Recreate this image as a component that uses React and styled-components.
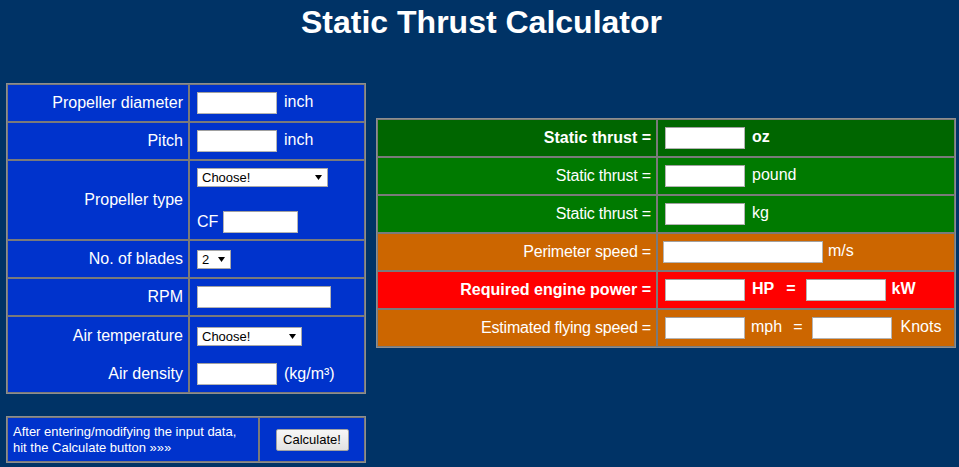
import React from 'react';
import styled, { createGlobalStyle } from 'styled-components';

const Global = createGlobalStyle`
  html, body { margin: 0; padding: 0; background: #003366; }
  body { font-family: "Liberation Sans", Arial, sans-serif; color: #fff; }
  * { box-sizing: border-box; }
`;

const Page = styled.div`
  width: 959px;
  min-height: 467px;
  background: #003366;
`;

const Title = styled.h1`
  margin: 0;
  padding: 4px 0 0 4px;
  font-size: 32px;
  line-height: 37px;
  font-weight: bold;
  text-align: center;
  color: #fff;
`;

const Main = styled.div`
  display: flex;
  align-items: flex-start;
  gap: 10px;
  padding-left: 6px;
`;

const LeftCol = styled.div`
  margin-top: 42px;
  width: 360px;
  display: flex;
  flex-direction: column;
  gap: 22px;
`;

const RightCol = styled.div`
  margin-top: 77px;
  width: 580px;
`;

const Grid = styled.table`
  width: ${(p) => p.$w}px;
  border-collapse: separate;
  border-spacing: 0;
  table-layout: fixed;
  border: 1px solid #8e8e8e;
  background: ${(p) => p.$bg || '#0033cc'};
`;

const Label = styled.td`
  width: ${(p) => p.$w}px;
  height: ${(p) => (p.$h || 36) + 2}px;
  border: 1px solid #7a7a7a;
  padding: 0 5px 0 0;
  text-align: right;
  vertical-align: middle;
  font-size: 16px;
  font-weight: ${(p) => (p.$bold ? 'bold' : 'normal')};
  letter-spacing: ${(p) => (p.$tight ? '-0.2px' : 'normal')};
  color: #fff;
  background: ${(p) => p.$bg || 'transparent'};
  white-space: nowrap;
`;

const Value = styled.td`
  height: ${(p) => (p.$h || 36) + 2}px;
  border: 1px solid #7a7a7a;
  padding: 0 0 0 7px;
  vertical-align: middle;
  font-size: 16px;
  font-weight: ${(p) => (p.$bold ? 'bold' : 'normal')};
  color: #fff;
  background: ${(p) => p.$bg || 'transparent'};
  white-space: nowrap;
`;

const Line = styled.div`
  height: ${(p) => p.$h || 38}px;
  display: flex;
  align-items: center;
  justify-content: ${(p) => (p.$right ? 'flex-end' : 'flex-start')};
`;

const Stack = styled.div`
  display: flex;
  flex-direction: column;
  gap: 24px;
`;

const Field = styled.input`
  width: ${(p) => p.$w || 80}px;
  height: 22px;
  margin: 0 0 0 ${(p) => p.$ml || 0}px;
  padding: 1px 3px;
  border: 1px solid #b4b4b4;
  border-top-color: #a0a0a0;
  background: #fff;
  font: 13px "Liberation Sans", Arial, sans-serif;
  vertical-align: middle;
  outline: none;
`;

const Unit = styled.span`
  margin: 0 ${(p) => p.$mr || 0}px 0 ${(p) => (p.$ml === undefined ? 7 : p.$ml)}px;
  font-weight: inherit;
`;

const SelectWrap = styled.span`
  position: relative;
  display: inline-block;
  width: ${(p) => p.$w}px;
  height: 19px;
  vertical-align: middle;
`;

const Select = styled.select`
  appearance: none;
  -webkit-appearance: none;
  width: 100%;
  height: 100%;
  margin: 0;
  padding: 0 0 0 4px;
  border: 1px solid #a9a9a9;
  border-radius: 0;
  background: #fff;
  color: #000;
  font: 13px "Liberation Sans", Arial, sans-serif;
  outline: none;
`;

const Arrow = styled.svg`
  position: absolute;
  right: 6px;
  top: 7px;
  pointer-events: none;
`;

const CfLabel = styled.span`
  margin-right: 5px;
  font-size: 16px;
`;

const Note = styled.td`
  width: 252px;
  height: 45px;
  border: 1px solid #7a7a7a;
  padding: 0 0 0 5px;
  font-size: 13px;
  line-height: 16px;
  color: #fff;
  vertical-align: middle;
`;

const ButtonCell = styled.td`
  border: 1px solid #7a7a7a;
  text-align: center;
  vertical-align: middle;
`;

const Button = styled.button`
  width: 73px;
  height: 22px;
  padding: 0;
  border: 1px solid #a2a2a2;
  border-radius: 2px;
  background: linear-gradient(#f7f7f7, #e2e2e2);
  color: #000;
  font: 13px "Liberation Sans", Arial, sans-serif;
`;

function Dropdown({ w, value, options }) {
  return (
    <SelectWrap $w={w}>
      <Select defaultValue={value}>
        {options.map((o) => (
          <option key={o}>{o}</option>
        ))}
      </Select>
      <Arrow width="7" height="5" viewBox="0 0 7 5">
        <polygon points="0,0 7,0 3.5,5" fill="#000" />
      </Arrow>
    </SelectWrap>
  );
}

const DG = '#006600';
const GR = '#007a00';
const OR = '#cc6600';
const RD = '#ff0000';

export default function App() {
  return (
    <Page>
      <Global />
      <Title>Static Thrust Calculator</Title>
      <Main>
        <LeftCol>
          <Grid $w={360}>
            <tbody>
              <tr>
                <Label $w={182}>Propeller diameter</Label>
                <Value>
                  <Field />
                  <Unit>inch</Unit>
                </Value>
              </tr>
              <tr>
                <Label>Pitch</Label>
                <Value>
                  <Field />
                  <Unit>inch</Unit>
                </Value>
              </tr>
              <tr>
                <Label $h={78}>Propeller type</Label>
                <Value $h={78}>
                  <Stack>
                    <Line $h={19}>
                      <Dropdown w={131} value="Choose!" options={['Choose!']} />
                    </Line>
                    <Line $h={21}>
                      <CfLabel>CF</CfLabel>
                      <Field $w={75} />
                    </Line>
                  </Stack>
                </Value>
              </tr>
              <tr>
                <Label>No. of blades</Label>
                <Value>
                  <Dropdown w={34} value="2" options={['2', '3', '4']} />
                </Value>
              </tr>
              <tr>
                <Label>RPM</Label>
                <Value>
                  <Field $w={134} />
                </Value>
              </tr>
              <tr>
                <Label $h={75}>
                  <Line $right>Air temperature</Line>
                  <Line $right $h={37}>Air density</Line>
                </Label>
                <Value $h={75}>
                  <Line>
                    <Dropdown w={105} value="Choose!" options={['Choose!']} />
                  </Line>
                  <Line $h={37}>
                    <Field />
                    <Unit>(kg/m³)</Unit>
                  </Line>
                </Value>
              </tr>
            </tbody>
          </Grid>
          <Grid $w={360}>
            <tbody>
              <tr>
                <Note>
                  After entering/modifying the input data,
                  <br />
                  hit the Calculate button »»»
                </Note>
                <ButtonCell>
                  <Button type="button">Calculate!</Button>
                </ButtonCell>
              </tr>
            </tbody>
          </Grid>
        </LeftCol>
        <RightCol>
          <Grid $w={580} $bg={GR}>
            <tbody>
              <tr>
                <Label $w={280} $bg={DG} $bold>Static thrust =</Label>
                <Value $bg={DG} $bold>
                  <Field />
                  <Unit>oz</Unit>
                </Value>
              </tr>
              <tr>
                <Label $bg={GR} $tight>Static thrust =</Label>
                <Value $bg={GR}>
                  <Field />
                  <Unit>pound</Unit>
                </Value>
              </tr>
              <tr>
                <Label $bg={GR} $tight>Static thrust =</Label>
                <Value $bg={GR}>
                  <Field />
                  <Unit>kg</Unit>
                </Value>
              </tr>
              <tr>
                <Label $bg={OR} $tight>Perimeter speed =</Label>
                <Value $bg={OR}>
                  <Field $w={160} $ml={-2} />
                  <Unit $ml={5}>m/s</Unit>
                </Value>
              </tr>
              <tr>
                <Label $bg={RD} $bold>Required engine power =</Label>
                <Value $bg={RD} $bold>
                  <Field />
                  <Unit>HP</Unit>
                  <Unit $ml={12} $mr={10}>=</Unit>
                  <Field />
                  <Unit $ml={6}>kW</Unit>
                </Value>
              </tr>
              <tr>
                <Label $bg={OR} $tight>Estimated flying speed =</Label>
                <Value $bg={OR}>
                  <Field />
                  <Unit $ml={6}>mph</Unit>
                  <Unit $ml={11} $mr={10}>=</Unit>
                  <Field />
                  <Unit $ml={8}>Knots</Unit>
                </Value>
              </tr>
            </tbody>
          </Grid>
        </RightCol>
      </Main>
    </Page>
  );
}
